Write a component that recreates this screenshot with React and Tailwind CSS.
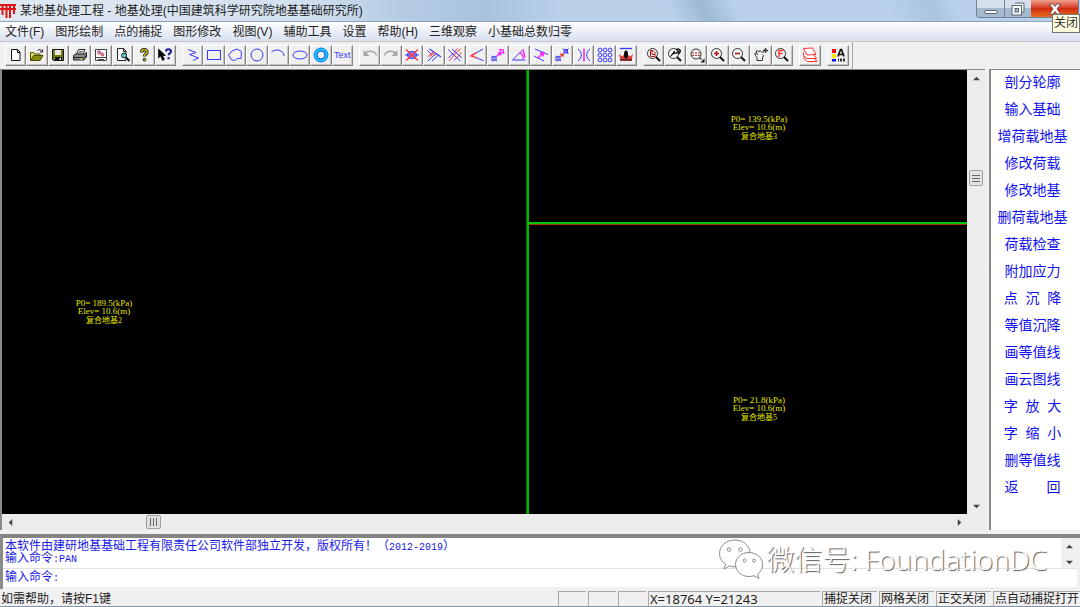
import { useState } from 'react';

const BLUE = '#3a3aff';
const RED = '#ff3030';
const PINK = '#ff22ff';

const MENUS = [
  '文件(F)',
  '图形绘制',
  '点的捕捉',
  '图形修改',
  '视图(V)',
  '辅助工具',
  '设置',
  '帮助(H)',
  '三维观察',
  '小基础总数归零',
];

const COMMANDS = [
  '剖分轮廓',
  '输入基础',
  '增荷载地基',
  '修改荷载',
  '修改地基',
  '删荷载地基',
  '荷载检查',
  '附加应力',
  '点  沉  降',
  '等值沉降',
  '画等值线',
  '画云图线',
  '字  放  大',
  '字  缩  小',
  '删等值线',
  '返　　回',
];

const ZONES = [
  { name: '复合地基2', load: '189.5', elev: '10.6', place: 'left-[102px] top-[229px]' },
  { name: '复合地基3', load: '139.5', elev: '10.6', place: 'left-[757px] top-[45px]' },
  { name: '复合地基5', load: '21.8', elev: '10.6', place: 'left-[757px] top-[326px]' },
];

function Icon({ children, stroke = BLUE }) {
  return (
    <svg className="size-4 shrink-0" viewBox="0 0 16 16" fill="none" stroke={stroke} strokeWidth="1" aria-hidden="true">
      {children}
    </svg>
  );
}

// Magnifier shared by all of the zoom tools
function Lens({ children }) {
  return (
    <Icon stroke="#333">
      <circle cx="6.5" cy="6.500" r="5" fill="#f4f4f4" />
      <path d="M10 10l4 4" stroke="#111" strokeWidth="2" />
      {children}
    </Icon>
  );
}

const FILE_TOOLS = [
  {
    label: '新建',
    icon: (
      <Icon stroke="#111">
        <path d="M3.5 2.5h6l2.500 2.500v8.500h-8.500z" fill="#fff" />
        <path d="M9.500 2.500v3h2.500" />
      </Icon>
    ),
  },
  {
    label: '打开',
    icon: (
      <Icon stroke="#4a4a00">
        <path d="M1.500 13V5.500h3l1 1.500h5.500v2" fill="#e8e060" />
        <path d="M1.500 13.500l3-5h9.500l-3 5z" fill="#8a8a10" />
        <path d="M8.500 3.500c1.500-1.500 3.500-1 4.500 1M13.500 2.500v2.500h-2.500" stroke="#222" />
      </Icon>
    ),
  },
  {
    label: '保存',
    icon: (
      <Icon stroke="#111">
        <path d="M2.500 2.500h11v11h-10l-1-1z" fill="#77770a" />
        <path d="M5 3h6v5H5z" fill="#e8e8e8" stroke="none" />
        <path d="M5 10h7v4H5z" fill="#111" stroke="none" />
        <path d="M9.500 11h1.500v2h-1.500z" fill="#eee" stroke="none" />
      </Icon>
    ),
  },
  {
    label: '打印',
    icon: (
      <Icon stroke="#222">
        <path d="M4.500 7l2-4.500h6.500l-2 4.500" fill="#fff" />
        <path d="M7 4.500h4M6 6h4" strokeWidth=".7" />
        <path d="M1.500 8.500l2-1.500h9l2-1.500v4.500l-2.500 3h-10.500z" fill="#8a8a8a" />
        <path d="M2 10.500h10l2-2" />
        <path d="M8 12h2.500" stroke="#e4e040" />
      </Icon>
    ),
  },
  {
    label: '打印设置',
    icon: (
      <Icon stroke="#444">
        <rect x="2.500" y="2.500" width="11" height="8" fill="#fff" />
        <circle cx="6" cy="5.500" r="1.600" stroke={RED} />
        <path d="M5 4l6 5" stroke={BLUE} />
        <circle cx="9.500" cy="7.500" r="1.400" stroke={RED} />
        <path d="M2.500 10.500v3h11v-3M5 12.500h6" />
      </Icon>
    ),
  },
  {
    label: '打印预览',
    icon: (
      <Icon stroke="#222">
        <path d="M2.500 1.500h6l2.500 2.500v9.500h-8.500z" fill="#fff" />
        <path d="M8.500 1.500v3h2.500" />
        <circle cx="9" cy="8.500" r="2.500" fill="#58c8c8" />
        <path d="M11 10.500l3.500 3.500" stroke="#111" strokeWidth="2" />
      </Icon>
    ),
  },
  {
    label: '关于',
    icon: (
      <Icon stroke="#222">
        <path d="M5.500 5.500c0-3.500 5.500-3.500 5.500-.5 0 2-2.500 2-2.500 4.500" strokeWidth="3.400" />
        <path d="M5.500 5c0-3 5.500-3 5.500 0 0 2-2.500 2-2.500 4.200" stroke="#c8c018" strokeWidth="1.600" />
        <circle cx="8.500" cy="12.700" r="1.400" fill="#b8b010" />
      </Icon>
    ),
  },
  {
    label: '帮助',
    icon: (
      <Icon stroke="#000">
        <path d="M1.500 2v9l2.200-2 1.800 4.500 2-1-2-4h3z" fill="#000" strokeWidth=".6" />
        <path d="M9 4.500c0-3 5-3 5-.2 0 2-2.400 1.800-2.400 4" stroke="#15159a" strokeWidth="2" />
        <path d="M10.500 10.200h2.200v2h-2.200z" fill="#15159a" stroke="none" />
      </Icon>
    ),
  },
];

const DRAW_TOOLS = [
  { label: '折线', icon: <Icon><path d="M3 2.500l8 3-6.500 2 9 3.500-5.500 2.500" /></Icon> },
  { label: '矩形', icon: <Icon><rect x="1.500" y="3.500" width="13" height="9" /></Icon> },
  { label: '多边形', icon: <Icon><path d="M5 4l5-2 4.500 2.500-.5 7-3.500 0-3 2-3.500-1-2.500-4.500z" /></Icon> },
  { label: '圆', icon: <Icon><circle cx="8" cy="8" r="6" /></Icon> },
  { label: '圆弧', icon: <Icon><path d="M1.500 5c4-3.500 12-2.500 12.500 4" /></Icon> },
  { label: '椭圆', icon: <Icon><ellipse cx="8" cy="8" rx="7" ry="4" /></Icon> },
  {
    label: '圆环',
    icon: (
      <Icon>
        <circle cx="8" cy="8" r="5.500" stroke="#10c8ff" strokeWidth="3" />
        <circle cx="8" cy="8" r="7" stroke="#1878f0" />
        <circle cx="8" cy="8" r="4" stroke="#1848e0" />
      </Icon>
    ),
  },
  { label: '文字', text: 'Text' },
];

const SNAP_TOOLS = [
  {
    label: '撤消',
    icon: (
      <Icon stroke="#a4a4a4">
        <path d="M3 6.500c3.500-3.500 10-3 11.500 2" strokeWidth="1.500" />
        <path d="M1.500 3v6h6z" fill="#a4a4a4" stroke="none" />
      </Icon>
    ),
  },
  {
    label: '重做',
    icon: (
      <Icon stroke="#a4a4a4">
        <path d="M13 6.500c-3.500-3.500-10-3-11.500 2" strokeWidth="1.500" />
        <path d="M14.500 3v6h-6z" fill="#a4a4a4" stroke="none" />
      </Icon>
    ),
  },
  {
    label: '删除',
    icon: (
      <Icon>
        <ellipse cx="8" cy="8" rx="4.500" ry="3.500" />
        <path d="M1 8h14M5 6h6v4H5z" />
        <path d="M2 2.500l12 11M14 2.500l-12 11" stroke={RED} strokeWidth="1.200" />
      </Icon>
    ),
  },
  {
    label: '平行',
    icon: (
      <Icon>
        <path d="M3.500 2l11.500 8" strokeWidth="1.200" />
        <path d="M1.500 3.500l4 4M2 14l8-7.500M6 14l6.500-6" />
        <path d="M1.500 10l6-5.500M4 9.500l4.500-4M8 9l2-2" stroke={RED} />
      </Icon>
    ),
  },
  {
    label: '修剪',
    icon: (
      <Icon>
        <path d="M1 2.500l12.500 11.500M1.500 11l5-5M7 13.500l3-3" />
        <path d="M6.500 6l4-4.500M10 10.500l4.500-5M2 14l11.500-12.500" stroke={RED} />
        <path d="M5 2l10 9" />
      </Icon>
    ),
  },
  {
    label: '角度',
    icon: (
      <Icon>
        <path d="M14 2l-12.500 7" />
        <path d="M7 5.900l-5 3 5.500 2" stroke={RED} strokeWidth="1.300" />
        <path d="M7 10.700l7.500 3" />
      </Icon>
    ),
  },
  {
    label: '复制',
    icon: (
      <Icon>
        <circle cx="4" cy="11.500" r="2.300" />
        <path d="M1.500 9l5.500 5M1.500 14l5-5" />
        <path d="M6.500 9.500l3.500-3.500M8 6h2.500v2.500" stroke={PINK} strokeWidth="1.500" />
        <path d="M10 2.500h3.500v3.500h-3.500zM9 1.500l5.500 5.500" stroke={PINK} />
      </Icon>
    ),
  },
  {
    label: '旋转',
    icon: (
      <Icon>
        <path d="M12 2.500l-10.500 10.500h13" />
        <path d="M8.500 6c2.500.5 4 3 3.500 6M12 2.500l2 8" stroke={PINK} strokeWidth="1.400" />
      </Icon>
    ),
  },
  {
    label: '偏移',
    icon: (
      <Icon>
        <path d="M2 2l13 5.500M1 9l10 5" />
        <path d="M5 11l5-5M7 6l3.500-.5-.5 4" stroke={PINK} strokeWidth="1.600" />
      </Icon>
    ),
  },
  {
    label: '移动',
    icon: (
      <Icon>
        <circle cx="4" cy="11.500" r="2.300" />
        <path d="M1.500 9l5.500 5M1.500 14l5-5" />
        <path d="M6.500 9.500l3.500-3M6.500 6.500l3 3" stroke={RED} strokeWidth="1.500" />
        <path d="M10 2.500h3.500v3.500h-3.500zM9 1.500l5.500 5.500M14.500 1.500l-5 5" />
      </Icon>
    ),
  },
  {
    label: '镜像',
    icon: (
      <Icon>
        <path d="M2 2c4.500 4 4.500 8 0 12M14 2c-4.500 4-4.500 8 0 12" />
        <path d="M8 1.500v13" stroke={PINK} strokeWidth="1.600" />
      </Icon>
    ),
  },
  {
    label: '阵列',
    icon: (
      <Icon>
        {[3, 8, 13].map((cy) => [3, 8, 13].map((cx) => <circle key={`${cx}-${cy}`} cx={cx} cy={cy} r="1.900" />))}
      </Icon>
    ),
  },
  {
    label: '炸开',
    icon: (
      <Icon>
        <path d="M2 1.500h12" strokeWidth="1.300" />
        <path d="M1 7l3 2.500 1.500-1.500L8 11l2.500-3L12 9.500l3-2.500-1.500 6.500h-11z" fill="#d84040" stroke="none" />
        <path d="M2 13h12" stroke="#601010" strokeWidth="1.500" />
        <ellipse cx="8" cy="7.500" rx="2" ry="4" fill="#000" stroke="none" />
      </Icon>
    ),
  },
];

const VIEW_TOOLS = [
  { label: '全图', icon: <Lens><path d="M4.500 3.500h2.500l2 2v4H4.500zM6 3.500v4h3" stroke="#b01818" /></Lens> },
  {
    label: '上一视图',
    icon: (
      <Lens>
        <path d="M3.500 9.500l4-5.500v2.500c3 0 4-1 4-3" fill="#111" stroke="#111" />
        <path d="M9 3c2-2 5-.5 4 2l-1.500 2" stroke="#111" strokeWidth="1.500" />
      </Lens>
    ),
  },
  {
    label: '窗口缩放',
    icon: (
      <Icon stroke="#333">
        <circle cx="7" cy="7" r="5" fill="#f4f4f4" />
        <path d="M3 6h8M3 8.500h8" stroke="#c03030" strokeDasharray="2 1" />
        <path d="M10.500 10.500l2 2" strokeWidth="1.500" />
        <path d="M11.500 15.500h4v-4z" fill="#111" stroke="none" />
      </Icon>
    ),
  },
  { label: '放大', icon: <Lens><path d="M4 6.500h5M6.500 4v5" stroke="#b01818" strokeWidth="1.600" /></Lens> },
  { label: '缩小', icon: <Lens><path d="M4 6.500h5" stroke="#b01818" strokeWidth="1.600" /></Lens> },
  {
    label: '平移',
    icon: (
      <Icon stroke="#333">
        <path d="M4 13.500v-3L1.500 7l1-1L4.500 7.500 3 4l1.500-.5L6 5l1-1.500L8.500 5H11M9.500 7.500l1 1-1 2.500v2.500M4 13.500h5.500" />
        <path d="M10 3.500h5M12.500 1v5" strokeWidth="1.400" />
      </Icon>
    ),
  },
  {
    label: '局部放大',
    icon: <Lens><path d="M5 10V3.500h4.500M5 6.500h3.500" stroke={RED} strokeWidth="1.500" /></Lens>,
  },
];

const LAYER_TOOLS = [
  {
    label: '图层',
    icon: (
      <Icon stroke={RED}>
        <path d="M2 9v2.500l3.500 3h9.500l-3-3.500" fill="#fff" />
        <path d="M1.500 5.500v3l3.500 3h9.500l-3-4" fill="#fff" />
        <path d="M1.500 1.500l9-.5 3.500 6.500-9 .5z" fill="#fff" />
      </Icon>
    ),
  },
];

const COLOR_TOOLS = [
  {
    label: '颜色',
    icon: (
      <Icon>
        <path d="M2 2h4v4H2z" fill="#e81010" stroke="none" />
        <path d="M2 7h4v4H2z" fill="#f4e800" stroke="none" />
        <path d="M2 12h4v2.500H2z" fill="#1010e0" stroke="none" />
        <path d="M8 9.500l2.500-7h1l2.500 7M9 7.500h4" stroke="#111" strokeWidth="1.700" />
        <path d="M8 11.500h1v3H8zM10 11.500h2v3h-2zM13 11.500h2v3h-2z" fill="#333" stroke="none" />
      </Icon>
    ),
  },
];

function ToolGroup({ tools, width }) {
  return (
    <div className={`flex h-[21px] shrink-0 ${width}`}>
      {tools.map((tool) => (
        <button
          key={tool.label}
          type="button"
          title={tool.label}
          aria-label={tool.label}
          className="flex min-w-0 flex-1 items-center justify-center border border-t-white border-l-white border-r-[#858585] border-b-[#858585] bg-[#f0f0f0] pb-px shadow-[inset_-1px_-1px_0_#c4c4c4] active:bg-[#ddd]"
        >
          {tool.icon}
          {tool.text && <span className="font-['Liberation_Sans_Narrow','Liberation_Sans',sans-serif] text-[9px] leading-none text-[#3a3aff]">{tool.text}</span>}
        </button>
      ))}
    </div>
  );
}

function ArrowButton({ label, d, className = '' }) {
  return (
    <button type="button" aria-label={label} className={`flex size-4 shrink-0 items-center justify-center ${className}`}>
      <svg className="size-[7px]" viewBox="0 0 8 8" fill="#444" aria-hidden="true">
        <path d={d} />
      </svg>
    </button>
  );
}

const UP = 'M0 6l4-4 4 4z';
const DOWN = 'M0 2l4 4 4-4z';
const LEFT = 'M6 0L2 4l4 4z';
const RIGHT = 'M2 0l4 4-4 4z';

function TitleBar() {
  return (
    <header className="relative flex h-[21px] shrink-0 items-center bg-[linear-gradient(60deg,transparent_62%,#9db8d4_65%,transparent_68%,transparent_82%,#a9c4e0_86%,transparent_88%),linear-gradient(90deg,#dfe8f1_0%,#d3e0ee_28%,#b5cce4_37%,#a9c3de_45%,#b9d0e9_52%,#b9d1ea_100%)]">
      <svg className="h-[15px] w-4 shrink-0" viewBox="0 0 16 15" fill="none" stroke="#e01515" strokeWidth="2" aria-hidden="true">
        <path d="M0 2h16M0 6h16M2.500 2v10M6.500 2v13M10 2v13M14 2v9" />
      </svg>
      <h1 className="ml-1 whitespace-nowrap text-[12px] text-[#222]">某地基处理工程 - 地基处理(中国建筑科学研究院地基基础研究所)</h1>
      <div className="ml-auto mr-px flex h-[18px] self-start overflow-hidden rounded-b border border-t-0 border-[#6d8299]">
        <button type="button" aria-label="最小化" className="flex w-7 items-center justify-center border-r border-[#6d8299] bg-linear-to-b from-[#d5e0ec] from-45% to-[#a5bacf] to-50%">
          <span className="mt-1.5 h-1 w-3.5 rounded-xs border border-[#5b6673] bg-white" />
        </button>
        <button type="button" aria-label="还原" className="flex w-[26px] items-center justify-center bg-linear-to-b from-[#d5e0ec] from-45% to-[#a5bacf] to-50%">
          <svg className="size-3.5" viewBox="0 0 14 14" fill="none" aria-hidden="true">
            <path d="M4 1h9v9h-2" stroke="#5b6673" strokeWidth="1" fill="#eef3f8" />
            <rect x="1" y="3.500" width="9.500" height="9.500" fill="#fff" stroke="#5b6673" />
            <rect x="4" y="6.500" width="3.500" height="3.500" fill="#a5bacf" stroke="#5b6673" />
          </svg>
        </button>
        <button type="button" aria-label="关闭" className="flex w-[47px] items-center justify-center bg-linear-to-b from-[#f0a090] via-[#d02a10] via-50% to-[#e86820]">
          <svg className="h-3 w-3.5" viewBox="0 0 14 12" fill="#fff" stroke="#5a4848" strokeWidth=".8" aria-hidden="true">
            <path d="M1.500 1h3.500l2 2.600L9 1h3.500L9 6l3.500 5H9L7 8.400 5 11H1.500L5 6z" />
          </svg>
        </button>
      </div>
      <div role="tooltip" className="absolute top-3.5 right-0 z-10 border border-[#767676] bg-[#ffffe1] px-px text-[12px] leading-[17px] text-[#333]">
        关闭
      </div>
    </header>
  );
}

function Zone({ zone }) {
  return (
    <div className={`absolute -translate-x-1/2 whitespace-nowrap text-center font-['Liberation_Serif','Noto_Sans_CJK_SC',serif] text-[9px] leading-[8px] text-[#e4e400] ${zone.place}`}>
      <p>P0= {zone.load}(kPa)</p>
      <p>Elev= {zone.elev}(m)</p>
      <p className="text-[8px] leading-[11px]">{zone.name}</p>
    </div>
  );
}

function Drawing() {
  return (
    <section className="flex min-w-0 flex-1 flex-col border-t border-l-2 border-[#8a8a8a] bg-[#f0f0f0]">
      <div className="flex min-h-0 flex-1">
        <div className="relative min-w-0 flex-1 overflow-hidden bg-black">
          <div className="absolute inset-y-0 left-[524px] w-[3px] border-l border-[#067006] bg-[#00b400]" />
          <div className="absolute top-[152px] right-0 left-[527px] h-[3px] border-b border-[#b03000] bg-[#00c800]" />
          {ZONES.map((zone) => (
            <Zone key={zone.name} zone={zone} />
          ))}
        </div>
        <div className="flex w-[18px] shrink-0 flex-col items-center bg-[#ececec]">
          <ArrowButton label="向上滚动" d={UP} />
          <div className="h-[84px]" />
          <div className="flex h-4 w-3.5 flex-col items-center justify-center gap-0.5 rounded-xs border border-[#a0a0a0] bg-[#e4e4e4]">
            <span className="h-px w-2 bg-[#666]" />
            <span className="h-px w-2 bg-[#666]" />
            <span className="h-px w-2 bg-[#666]" />
          </div>
          <ArrowButton label="向下滚动" d={DOWN} className="mt-auto" />
        </div>
      </div>
      <div className="flex h-4 shrink-0 items-center bg-[#ececec] pr-[18px]">
        <ArrowButton label="向左滚动" d={LEFT} />
        <div className="w-32" />
        <div className="flex h-3.5 w-[15px] items-center justify-center gap-0.5 rounded-xs border border-[#a0a0a0] bg-[#e0e0e0]">
          <span className="h-2 w-px bg-[#666]" />
          <span className="h-2 w-px bg-[#666]" />
          <span className="h-2 w-px bg-[#666]" />
        </div>
        <ArrowButton label="向右滚动" d={RIGHT} className="ml-auto" />
      </div>
    </section>
  );
}

function CommandPanel() {
  return (
    <nav className="ml-1 flex w-[91px] shrink-0 flex-col border-t border-l-2 border-[#8a8a8a] bg-white">
      {COMMANDS.map((name) => (
        <button key={name} type="button" className="h-[27px] whitespace-pre pr-1.5 pb-1 text-[14px] leading-none text-[#1010f0] hover:bg-blue-50">
          {name}
        </button>
      ))}
    </nav>
  );
}

function Watermark() {
  return (
    <div className="pointer-events-none absolute top-0 right-[33px] flex items-center text-white">
      <svg className="h-[42px] w-[46px] shrink-0" viewBox="0 0 46 42" fill="#fff" stroke="#8c8c8c" strokeWidth="1" aria-hidden="true">
        <path d="M17 2C8 2 1.500 8 1.500 15.500c0 4.500 2.300 8 6 10.500L6 31l5.500-3c2 .6 3.700.8 6 .8C26 28.500 32 22.500 32 15.500 32 8 25.500 2 17 2z" />
        <circle cx="11" cy="11.500" r="1.800" />
        <circle cx="22.500" cy="11.500" r="1.800" />
        <path d="M31 14.500c-8 0-13.500 5.500-13.500 12s5.500 12 13.500 12c1.800 0 3.500-.3 5-.8l5 2.800-1.300-4.500c3.200-2.300 5-5.600 5-9.500 0-6.500-6-12-13.700-12z" />
        <circle cx="26.500" cy="22.500" r="1.500" />
        <circle cx="36" cy="22.500" r="1.500" />
      </svg>
      <span className="ml-0.5 whitespace-nowrap font-['Noto_Sans','Noto_Sans_CJK_SC',sans-serif] text-[28px] leading-[40px] font-light [text-shadow:1px_1px_1px_#555]">
        微信号: FoundationDC
      </span>
    </div>
  );
}

function Console() {
  const [command, setCommand] = useState('');

  return (
    <section className="relative mt-1 shrink-0 border-t-4 border-l-3 border-t-[#858585] border-l-[#8a8a8a] bg-[#f0f0f0] pr-[3px] pb-0.5 text-[12px] leading-[12px] text-[#1818e8]">
      <div className="flex h-[31px] justify-between border-b border-[#e0e0e0] bg-white">
        <div className="pt-0.5 pl-0.5">
          <p className="h-3">
            本软件由建研地基基础工程有限责任公司软件部独立开发，版权所有！（
            <span className="font-['Liberation_Mono',monospace] text-[10px]">2012-2019</span>）
          </p>
          <p className="h-3">
            输入命令<span className="font-['Liberation_Mono',monospace] text-[10px]">:PAN</span>
          </p>
        </div>
        <div className="flex w-4 flex-col justify-between bg-[#f0f0f0]">
          <ArrowButton label="上一行" d={UP} />
          <ArrowButton label="下一行" d={DOWN} />
        </div>
      </div>
      <div className="flex h-[18px] items-center bg-white pl-0.5">
        <label htmlFor="command">
          输入命令<span className="font-['Liberation_Mono',monospace] text-[10px]">:</span>
        </label>
        <input
          id="command"
          type="text"
          autoComplete="off"
          value={command}
          onChange={(e) => setCommand(e.target.value)}
          className="min-w-0 flex-1 bg-transparent pl-1 outline-none"
        />
      </div>
      <Watermark />
    </section>
  );
}

function StatusCell({ width, children }) {
  return <div className={`h-[15px] shrink-0 whitespace-nowrap border-t border-l border-[#a8a8a8] pl-px leading-[15px] ${width}`}>{children}</div>;
}

function StatusBar() {
  return (
    <footer className="flex h-[18px] shrink-0 items-end gap-0.5 border-b border-[#8494a8] bg-[#f0f0f0] text-[12px] text-[#222]">
      <p className="mr-auto h-[15px] pl-px leading-[17px]">如需帮助，请按F1键</p>
      <StatusCell width="w-7" />
      <StatusCell width="w-7" />
      <StatusCell width="w-7" />
      <StatusCell width="w-[172px]">
        <span className="font-['Noto_Sans',sans-serif] text-[13px]">X=18764 Y=21243</span>
      </StatusCell>
      <StatusCell width="w-[55px]">捕捉关闭</StatusCell>
      <StatusCell width="w-[55px]">网格关闭</StatusCell>
      <StatusCell width="w-[55px]">正交关闭</StatusCell>
      <StatusCell width="w-[87px]">点自动捕捉打开</StatusCell>
    </footer>
  );
}

export default function App() {
  return (
    <div lang="zh-CN" className="flex h-screen flex-col overflow-hidden bg-[#f0f0f0] font-['Liberation_Sans','Noto_Sans_CJK_SC',sans-serif]">
      <TitleBar />
      <nav className="flex h-5 shrink-0 items-center gap-[11px] border-t border-[#8fa3b8] bg-linear-to-b from-white to-[#d8dff0] pl-[5px] text-[12px] leading-none text-[#222]">
        {MENUS.map((name) => (
          <button key={name} type="button" className="whitespace-nowrap">
            {name}
          </button>
        ))}
      </nav>
      <div className="flex h-7 shrink-0 items-center gap-1.5 border-t border-[#c8c8c8] pl-[5px]">
        <ToolGroup tools={FILE_TOOLS} width="w-[171px]" />
        <ToolGroup tools={DRAW_TOOLS} width="w-[171px]" />
        <ToolGroup tools={SNAP_TOOLS} width="w-[278px]" />
        <ToolGroup tools={VIEW_TOOLS} width="w-[150px]" />
        <ToolGroup tools={LAYER_TOOLS} width="w-[22px]" />
        <div className="flex h-full items-center border-r border-[#a8a8a8] pr-[3px]">
          <ToolGroup tools={COLOR_TOOLS} width="w-[22px]" />
        </div>
      </div>
      <main className="flex min-h-0 flex-1">
        <Drawing />
        <CommandPanel />
      </main>
      <Console />
      <StatusBar />
    </div>
  );
}
